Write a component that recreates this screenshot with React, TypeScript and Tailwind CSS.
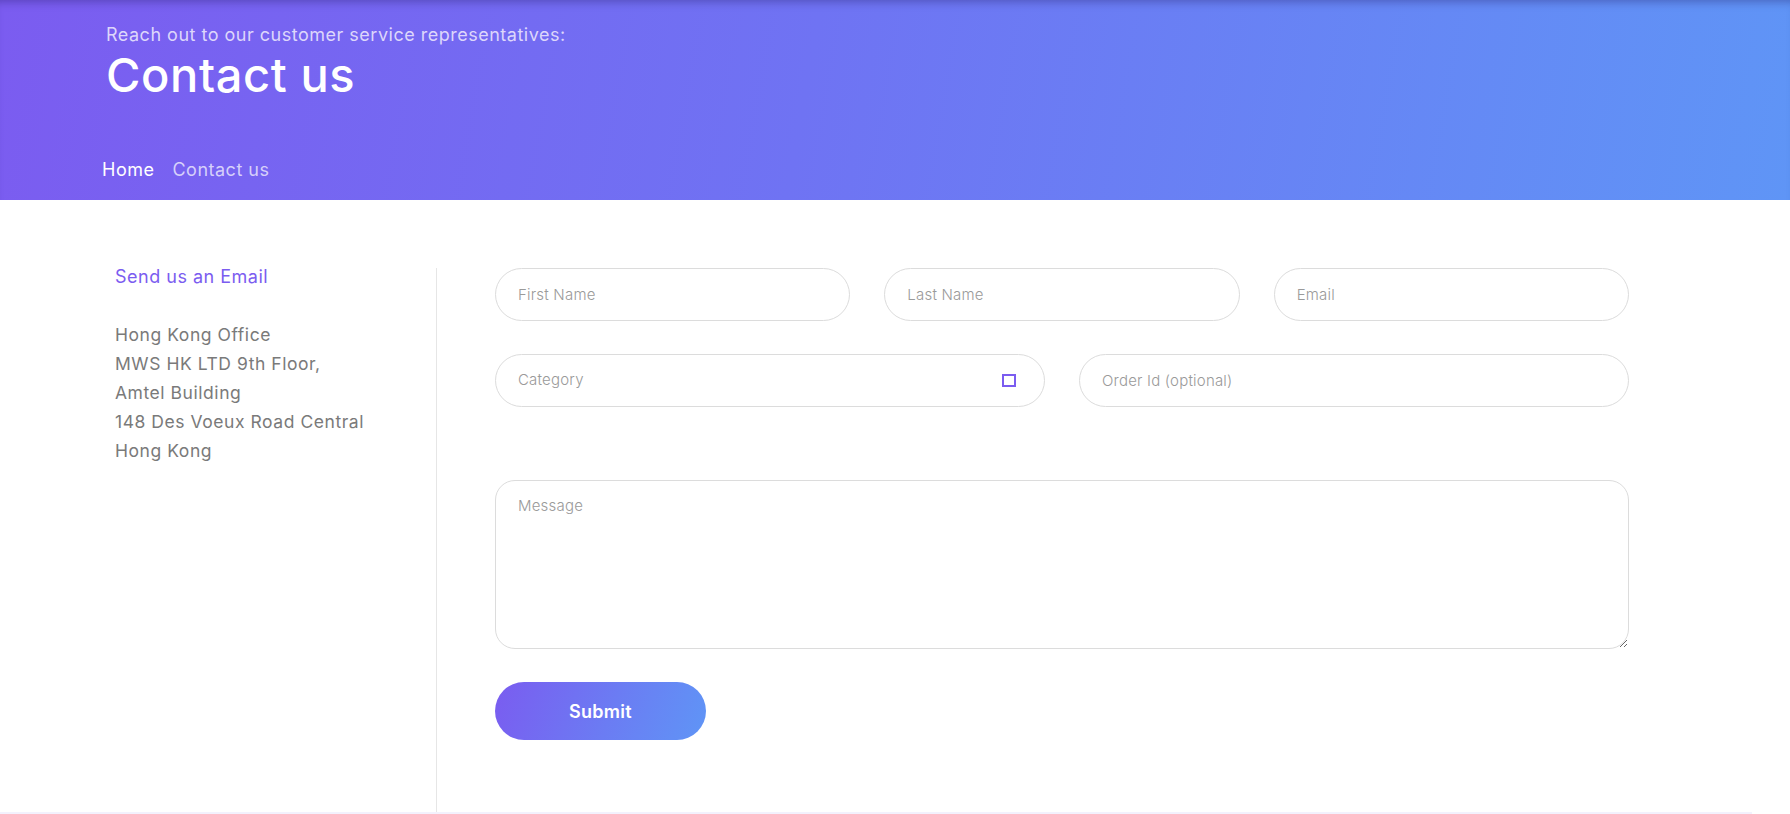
import React from "react";

const font = { fontFamily: "Inter, 'Noto Sans', sans-serif" };

function Field({ placeholder }: { placeholder: string }) {
  return (
    <input
      placeholder={placeholder}
      className="h-[53px] w-full rounded-full border border-[#dcdcdc] bg-white px-[22px] text-[15px] font-light tracking-[0.2px] text-[#555] placeholder:text-[#9a9a9a] outline-none"
    />
  );
}

export default function App() {
  return (
    <div className="min-h-[814px] w-full bg-white" style={font}>
      <header className="flex h-[200px] flex-col bg-[linear-gradient(100deg,#7b5cf0_0%,#6f73f3_45%,#5f95f6_100%)] px-[106px] pt-[24px] pb-[18px] shadow-[inset_0_8px_8px_-6px_rgba(30,20,90,0.35)]">
        <p className="text-[18px] leading-[22px] tracking-[0.5px] text-[#ddd6fb]">
          Reach out to our customer service representatives:
        </p>
        <h1 className="text-[47px] font-medium leading-[57px] tracking-[0.6px] text-white">
          Contact us
        </h1>
        <nav className="-ml-[4px] mt-auto flex gap-[18px] text-[18px] leading-[24px] tracking-[0.5px]">
          <span className="text-white">Home</span>
          <span className="text-[#d6d0fa]">Contact us</span>
        </nav>
      </header>

      <main className="flex h-[612px] px-[106px] pt-[68px]">
        <aside className="w-[331px] shrink-0 border-r border-[#e6e6e6] pl-[9px]">
          <h2 className="text-[18px] leading-[18px] tracking-[0.5px] text-[#7b5cf0]">Send us an Email</h2>
          <div className="mt-[34px] text-[17.5px] leading-[29px] tracking-[0.55px] text-[#7a7a7a]">
            <p>Hong Kong Office</p>
            <p>MWS HK LTD 9th Floor,</p>
            <p>Amtel Building</p>
            <p>148 Des Voeux Road Central</p>
            <p>Hong Kong</p>
          </div>
        </aside>

        <form className="ml-[58px] flex w-[1134px] flex-col">
          <div className="grid grid-cols-3 gap-x-[34px]">
            <Field placeholder="First Name" />
            <Field placeholder="Last Name" />
            <Field placeholder="Email" />
          </div>
          <div className="mt-[33px] grid grid-cols-2 gap-x-[34px]">
            <div className="flex h-[53px] items-center justify-between rounded-full border border-[#dcdcdc] pl-[22px] pr-[28px]">
              <span className="text-[15px] font-light tracking-[0.2px] text-[#9a9a9a]">Category</span>
              <span className="h-[13px] w-[14px] border-2 border-[#7b5cf0]" />
            </div>
            <Field placeholder="Order Id (optional)" />
          </div>
          <textarea
            placeholder="Message"
            className="mt-[73px] h-[169px] w-full rounded-[20px] border border-[#dcdcdc] px-[22px] pt-[14px] text-[15px] font-light tracking-[0.2px] text-[#555] placeholder:text-[#9a9a9a] outline-none"
          />
          <button
            type="button"
            className="mt-[33px] h-[58px] w-[211px] rounded-full bg-[linear-gradient(110deg,#7a5cf0_0%,#6b7cf3_55%,#5f95f6_100%)] text-[18px] font-semibold tracking-[0.3px] text-white"
          >
            Submit
          </button>
        </form>
      </main>
      <div className="mr-[38px] h-[2px] bg-[#f3f1fd]" />
    </div>
  );
}
